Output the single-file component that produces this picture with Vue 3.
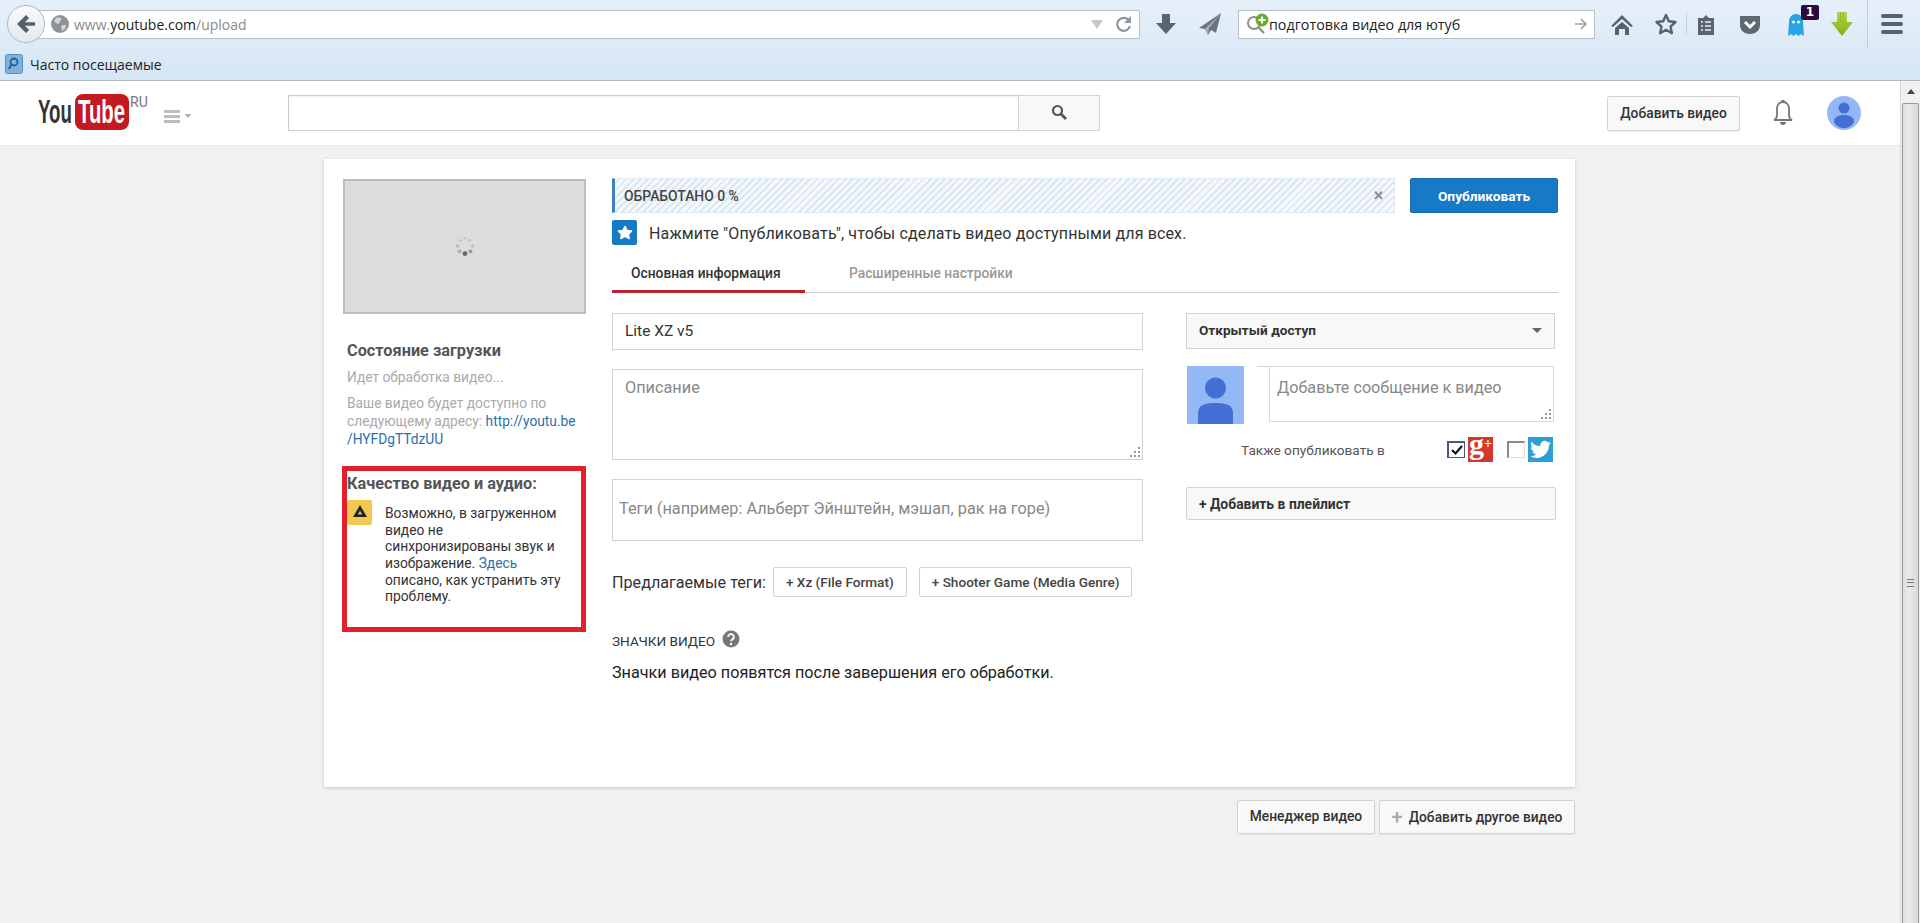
<script setup>
const tags = ['+ Xz (File Format)', '+ Shooter Game (Media Genre)']
</script>

<template>
  <div class="page">
    <!-- browser toolbar -->
    <header class="browser">
      <div class="toolbar">
        <button class="back">
          <svg width="24" height="24" viewBox="0 0 24 24"><path d="M12 3 3 12l9 9 3-3-4-4.2h10v-3.6H11L15 6z" fill="#55606e"/></svg>
        </button>
        <div class="address">
          <svg class="globe" width="18" height="18" viewBox="0 0 18 18">
            <circle cx="9" cy="9" r="9" fill="#8d9298"/>
            <path d="M5 3c3-1 5 0 6 1l-2 2-1 3-3-1-2-2zM11 10l4 0-1 4-3 2-1-4z" fill="#d2d5d8"/>
          </svg>
          <span class="url"><span class="dim">www.</span>youtube.com<span class="dim">/upload</span></span>
          <svg class="drop" width="12" height="10" viewBox="0 0 12 10"><path d="M0 1h12L6 10z" fill="#c3c8cd"/></svg>
          <svg class="reload" width="18" height="18" viewBox="0 0 18 18">
            <path d="M14 5.5A6.5 6.5 0 1 0 15 11" fill="none" stroke="#8e969e" stroke-width="2.2"/>
            <path d="M16 1v7H9z" fill="#8e969e"/>
          </svg>
        </div>
        <svg class="tool t-down" width="24" height="24" viewBox="0 0 24 24"><path d="M8 2h8v9h6L12 22 2 11h6z" fill="#5a6570"/></svg>
        <svg class="tool t-send" width="24" height="24" viewBox="0 0 24 24">
          <path d="M23 1 1 16l6 1 3 6 3-5 5 3z" fill="#6b747d"/>
          <path d="M23 1 7 17l3 6 1-7z" fill="#a9b0b7"/>
        </svg>
        <div class="websearch">
          <svg class="find" width="26" height="24" viewBox="0 0 26 24">
            <circle cx="9" cy="11" r="6" fill="none" stroke="#8f9288" stroke-width="2"/>
            <path d="m13 15 6 6" stroke="#8f9288" stroke-width="2.4"/>
            <circle cx="17" cy="8" r="6.5" fill="#62b02e"/>
            <path d="M17 4.5v7M13.5 8h7" stroke="#fff" stroke-width="2"/>
          </svg>
          <span class="query">подготовка видео для ютуб</span>
          <svg class="go" width="14" height="14" viewBox="0 0 14 14"><path d="M1 7h11M7 2l5 5-5 5" fill="none" stroke="#9aa1a8" stroke-width="1.6"/></svg>
        </div>
        <svg class="tool t-home" width="24" height="24" viewBox="0 0 24 24"><path d="M12 3 1 14l2 1 9-8 9 8 2-1zM5 16l7-6 7 6v7h-4v-6H9v6H5z" fill="#56626e"/></svg>
        <svg class="tool t-star" width="24" height="24" viewBox="0 0 24 24"><path d="m12 3 2.8 6.2 6.7.8-5 4.6 1.4 6.6L12 17.8l-5.900 3.400 1.400-6.600-5-4.600 6.700-.8z" fill="none" stroke="#56626e" stroke-width="2.400" stroke-linejoin="round"/></svg>
        <span class="sep"></span>
        <svg class="tool t-clip" width="24" height="24" viewBox="0 0 24 24">
          <path d="M4 6h5l3-3 3 3h5v17H4z" fill="#5a6570"/>
          <path d="M7 10h2M11 10h6M7 14h2M11 14h6M7 18h2M11 18h6" stroke="#e3edf6" stroke-width="1.600"/>
        </svg>
        <svg class="tool t-pocket" width="24" height="24" viewBox="0 0 24 24">
          <path d="M2 4h20v9c0 6-5 9-10 9S2 19 2 13z" fill="#5e6873"/>
          <path d="m7 10 5 5 5-5" fill="none" stroke="#fff" stroke-width="3"/>
        </svg>
        <div class="ghost-wrap">
          <svg width="24" height="24" viewBox="0 0 24 24">
            <path d="M4 24 5 10c0-5 3-8 7-8s7 3 7 8l1 14-3-2-2.500 2-2.500-2-2.500 2L7 22z" fill="#27a4e4"/>
            <circle cx="9.500" cy="10" r="1.500" fill="#fff"/><circle cx="14.500" cy="10" r="1.500" fill="#fff"/>
          </svg>
          <span class="badge">1</span>
        </div>
        <svg class="tool t-arrow" width="24" height="26" viewBox="0 0 24 26">
          <defs>
            <linearGradient id="arrowFill" x1="0" y1="0" x2="0" y2="1">
              <stop offset="0" stop-color="#b4d84a"/>
              <stop offset="1" stop-color="#7fb012"/>
            </linearGradient>
          </defs>
          <path d="M7 1h10v10h6L12 25 1 11h6z" fill="url(#arrowFill)"/>
          <path d="M10 1h1v10h-1zM13 1h1v10h-1z" fill="#8fbc24"/>
        </svg>
        <span class="sep tall"></span>
        <div class="burger"><i></i><i></i><i></i></div>
      </div>
      <div class="bookmarks">
        <svg width="18" height="20" viewBox="0 0 18 20">
          <rect x="0.500" y="0.500" width="17" height="19" rx="2" fill="#7eb2df" stroke="#5b8fbd"/>
          <circle cx="9" cy="8" r="3.500" fill="none" stroke="#1d5f99" stroke-width="1.800"/>
          <path d="m6 11-2 4" stroke="#1d5f99" stroke-width="2"/>
        </svg>
        <span>Часто посещаемые</span>
      </div>
    </header>

    <div class="viewport">
      <div class="content">
        <!-- youtube masthead -->
        <div class="masthead">
          <svg class="logo" width="112" height="38" viewBox="0 0 112 38">
            <text x="0" y="29" class="logo-you" textLength="34" lengthAdjust="spacingAndGlyphs">You</text>
            <rect x="37" y="0" width="54" height="36" rx="8" fill="#c4191f"/>
            <text x="40" y="29" class="logo-tube" textLength="47" lengthAdjust="spacingAndGlyphs">Tube</text>
            <text x="92" y="13" class="logo-ru">RU</text>
          </svg>
          <div class="guide">
            <span class="guide-bars"><i></i><i></i><i></i></span>
            <span class="guide-caret"></span>
          </div>
          <div class="yt-search">
            <input class="yt-input" type="text">
            <button class="yt-btn">
              <svg width="16" height="16" viewBox="0 0 16 16">
                <circle cx="6.500" cy="6.500" r="4.500" fill="none" stroke="#555" stroke-width="2.200"/>
                <path d="m10 10 5 5" stroke="#555" stroke-width="2.800"/>
              </svg>
            </button>
          </div>
          <button class="btn add-top">Добавить видео</button>
          <svg class="bell" width="24" height="28" viewBox="0 0 24 28">
            <path d="M12 3c-4 0-6 3-6 7v6c0 2-1 4-3 5h18c-2-1-3-3-3-5v-6c0-4-2-7-6-7z" fill="none" stroke="#777" stroke-width="1.800"/>
            <path d="M9 23h6a3 3 0 0 1-6 0zM10.500 1h3v3h-3z" fill="#777"/>
          </svg>
          <svg class="me" width="34" height="34" viewBox="0 0 34 34">
            <circle cx="17" cy="17" r="17" fill="#94b8f5"/>
            <circle cx="17" cy="12" r="5.500" fill="#4270d4"/>
            <path d="M7 26c0-5 4-7 10-7s10 2 10 7c-2 4-6 6-10 6s-8-2-10-6z" fill="#4270d4"/>
          </svg>
        </div>

        <main class="main">
          <section class="card">
            <aside class="left">
              <div class="thumb">
                <svg width="24" height="24" viewBox="0 0 22 22">
                  <circle cx="11" cy="17" r="2.200" fill="#666"/>
                  <circle cx="16" cy="15" r="1.800" fill="#999"/>
                  <circle cx="6" cy="15" r="1.800" fill="#aaa"/>
                  <circle cx="18" cy="10" r="1.500" fill="#bbb"/>
                  <circle cx="4" cy="10" r="1.500" fill="#bbb"/>
                  <circle cx="15" cy="5" r="1.300" fill="#c4c4c4"/>
                  <circle cx="7" cy="5" r="1.300" fill="#c4c4c4"/>
                  <circle cx="11" cy="3" r="1.300" fill="#c8c8c8"/>
                </svg>
              </div>
              <h3 class="state-title">Состояние загрузки</h3>
              <p class="state-line">Идет обработка видео...</p>
              <p class="state-url">Ваше видео будет доступно по следующему адресу: <a>http://youtu.be<br>/HYFDgTTdzUU</a></p>
              <div class="quality">
                <h3>Качество видео и аудио:</h3>
                <div class="quality-row">
                  <span class="warn">
                    <svg width="14" height="12" viewBox="0 0 14 12"><path d="M7 0 14 12H0zM7 5.500 5 9.500h4z" fill="#222" fill-rule="evenodd"/></svg>
                  </span>
                  <p>Возможно, в загруженном видео не синхронизированы звук и изображение. <a>Здесь</a> описано, как устранить эту проблему.</p>
                </div>
              </div>
            </aside>

            <div class="right">
              <div class="progress-row">
                <div class="progress">
                  <span class="progress-text">ОБРАБОТАНО 0 %</span>
                  <span class="progress-x">✕</span>
                </div>
                <button class="publish">Опубликовать</button>
              </div>
              <div class="notice">
                <span class="star-box">
                  <svg width="16" height="16" viewBox="0 0 16 16"><path d="m8 1.500 2.100 4 4.400.6-3.200 3 .9 4.400L8 11.400l-4.200 2.100.9-4.400-3.200-3 4.400-.6z" fill="#fff" stroke="#fff" stroke-width="1.600" stroke-linejoin="round"/></svg>
                </span>
                <span>Нажмите "Опубликовать", чтобы сделать видео доступными для всех.</span>
              </div>
              <nav class="tabs">
                <a class="tab active">Основная информация</a>
                <a class="tab">Расширенные настройки</a>
              </nav>
              <div class="form">
                <div class="form-main">
                  <input class="field title" type="text" value="Lite XZ v5">
                  <div class="area desc-area">
                    <textarea class="field desc" placeholder="Описание"></textarea>
                    <svg class="dots" width="10" height="10" viewBox="0 0 10 10"><path d="M8 0h2v2H8zM4 4h2v2H4zM8 4h2v2H8zM0 8h2v2H0zM4 8h2v2H4zM8 8h2v2H8z" fill="#999"/></svg>
                  </div>
                  <input class="field tagbox" type="text" placeholder="Теги (например: Альберт Эйнштейн, мэшап, рак на горе)">
                  <div class="suggest">
                    <span class="suggest-label">Предлагаемые теги:</span>
                    <button v-for="t in tags" :key="t" class="tag">{{ t }}</button>
                  </div>
                  <h4 class="badges">ЗНАЧКИ ВИДЕО
                    <svg width="18" height="18" viewBox="0 0 18 18">
                      <circle cx="9" cy="9" r="8.500" fill="#777"/>
                      <path d="M6.200 7a2.800 2.800 0 1 1 4.200 2.400C9.300 10 9 10.500 9 11.300" fill="none" stroke="#fff" stroke-width="1.800"/>
                      <circle cx="9" cy="14" r="1.200" fill="#fff"/>
                    </svg>
                  </h4>
                  <p class="badges-note">Значки видео появятся после завершения его обработки.</p>
                </div>
                <div class="form-side">
                  <button class="privacy"><span>Открытый доступ</span><i class="caret"></i></button>
                  <div class="share">
                    <svg width="57" height="58" viewBox="0 0 57 58">
                      <rect width="57" height="58" fill="#94b8f5"/>
                      <circle cx="28.500" cy="22" r="10.500" fill="#4270d4"/>
                      <path d="M11 58V47c0-8 7-10 17.500-10S46 39 46 47v11z" fill="#4270d4"/>
                    </svg>
                    <div class="area bubble">
                      <textarea placeholder="Добавьте сообщение к видео"></textarea>
                      <svg class="dots" width="10" height="10" viewBox="0 0 10 10"><path d="M8 0h2v2H8zM4 4h2v2H4zM8 4h2v2H8zM0 8h2v2H0zM4 8h2v2H4zM8 8h2v2H8z" fill="#999"/></svg>
                    </div>
                  </div>
                  <div class="also">
                    <span class="also-label">Также опубликовать в</span>
                    <span class="check on">
                      <svg width="14" height="12" viewBox="0 0 14 12"><path d="m2 6 3.500 3.500L12 2" fill="none" stroke="#111" stroke-width="2.200"/></svg>
                    </span>
                    <span class="net gplus"><span class="g">g</span><span class="p">+</span></span>
                    <span class="check second"></span>
                    <span class="net twitter">
                      <svg width="21" height="21" viewBox="0 0 24 24"><path d="M23.950 4.570a10 10 0 0 1-2.820.77 4.960 4.960 0 0 0 2.160-2.720c-.95.55-2 .96-3.120 1.190a4.920 4.920 0 0 0-8.380 4.480C7.690 8.100 4.070 6.130 1.640 3.160a4.820 4.820 0 0 0-.67 2.480c0 1.710.87 3.200 2.190 4.100a4.900 4.900 0 0 1-2.230-.61v.06a4.920 4.920 0 0 0 3.950 4.830 5 5 0 0 1-2.210.08 4.940 4.940 0 0 0 4.600 3.420A9.870 9.870 0 0 1 0 19.540a14 14 0 0 0 7.560 2.210c9.050 0 14-7.500 14-13.980 0-.21 0-.42-.02-.63a9.940 9.940 0 0 0 2.460-2.550z" fill="#fff"/></svg>
                    </span>
                  </div>
                  <button class="playlist">+ Добавить в плейлист</button>
                </div>
              </div>
            </div>
          </section>
          <div class="actions">
            <button class="btn manager">Менеджер видео</button>
            <button class="btn another"><span class="plus">+</span>Добавить другое видео</button>
          </div>
        </main>
      </div>

      <!-- page scrollbar -->
      <div class="scrollbar">
        <span class="arrow-up"></span>
        <div class="thumb-bar"><span class="grip"></span></div>
      </div>
    </div>
  </div>
</template>

<style>
html, body {
  margin: 0;
  overflow: hidden;
}
</style>

<style scoped>
.page {
  width: 1920px;
  height: 923px;
  display: flex;
  flex-direction: column;
  overflow: hidden;
  font-family: Roboto, "Noto Sans", sans-serif;
  background: #f1f1f1;
}
button {
  font-family: inherit;
  cursor: pointer;
}
h3, h4, p {
  margin: 0;
}
a {
  color: #2a6fa8;
}

/* browser */
.browser {
  height: 81px;
  box-sizing: border-box;
  flex: none;
  border-bottom: 1px solid #aeb9c4;
  background: linear-gradient(#e6f0fa, #d6e6f5);
  font-family: "Open Sans", "Noto Sans", sans-serif;
}
.toolbar {
  height: 48px;
  padding-left: 7px;
  display: flex;
  align-items: center;
}
.back {
  width: 38px;
  height: 38px;
  padding: 0;
  position: relative;
  z-index: 1;
  border-radius: 50%;
  border: 1px solid #aeb9c4;
  background: linear-gradient(#f8fafc, #e4e9ef);
  display: flex;
  align-items: center;
  justify-content: center;
}
.address {
  width: 1110px;
  height: 29px;
  margin-left: -15px;
  padding-left: 20px;
  box-sizing: border-box;
  background: #fff;
  border: 1px solid #b6c0ca;
  border-radius: 0 2px 2px 0;
  display: flex;
  align-items: center;
  font-size: 14px;
  color: #222;
}
.url {
  margin-left: 5px;
  flex: 1;
}
.dim {
  color: #8a8a8a;
}
.drop {
  margin-right: 12px;
}
.reload {
  margin-right: 6px;
}
.t-down { margin-left: 14px; }
.t-send { margin-left: 20px; }
.websearch {
  width: 357px;
  height: 29px;
  margin-left: 16px;
  box-sizing: border-box;
  padding: 0 6px;
  background: #fff;
  border: 1px solid #b6c0ca;
  display: flex;
  align-items: center;
  font-size: 14.300px;
  color: #222;
}
.query {
  flex: 1;
  margin-left: -2px;
}
.t-home { margin-left: 15px; }
.t-star { margin-left: 20px; }
.sep {
  width: 1px;
  height: 22px;
  margin-left: 8px;
  background: #c3ced9;
}
.sep.tall {
  height: 48px;
  margin-left: 13px;
}
.t-clip { margin-left: 7px; }
.t-pocket { margin-left: 20px; }
.ghost-wrap {
  margin-left: 22px;
  width: 24px;
  height: 24px;
  position: relative;
}
.badge {
  position: absolute;
  left: 17px;
  top: -7px;
  width: 18px;
  height: 15px;
  background: #2b0b3e;
  border-radius: 2px;
  color: #fff;
  font: bold 12px/15px "DejaVu Sans", sans-serif;
  text-align: center;
}
.t-arrow { margin-left: 22px; }
.burger {
  margin-left: 13px;
  width: 22px;
  display: flex;
  flex-direction: column;
  gap: 4px;
}
.burger i {
  display: block;
  height: 4px;
  border-radius: 2px;
  background: #56626e;
}
.bookmarks {
  height: 32px;
  padding-left: 5px;
  display: flex;
  align-items: center;
  gap: 7px;
  font-size: 14px;
  color: #222;
}

/* page area */
.viewport {
  flex: 1;
  display: flex;
  min-height: 0;
}
.content {
  flex: 1;
  min-width: 0;
}
.masthead {
  height: 65px;
  box-sizing: border-box;
  background: #fff;
  border-bottom: 1px solid #e8e8e8;
  display: flex;
  align-items: center;
  padding-left: 38px;
}
.logo {
  flex: none;
  overflow: visible;
}
.logo-you, .logo-tube {
  font: bold 34px "Liberation Sans", sans-serif;
}
.logo-you { fill: #333; }
.logo-tube { fill: #fff; }
.logo-ru {
  font: 14px Roboto, sans-serif;
  fill: #777;
}
.guide {
  margin-left: 14px;
  display: flex;
  align-items: center;
  gap: 5px;
  margin-top: 6px;
}
.guide-bars {
  width: 16px;
  display: flex;
  flex-direction: column;
  gap: 2px;
}
.guide-bars i {
  display: block;
  height: 3px;
  background: #bdbdbd;
}
.guide-caret {
  border: 3px solid transparent;
  border-top: 4px solid #aaa;
  border-bottom: 0;
}
.yt-search {
  margin-left: 97px;
  width: 812px;
  height: 36px;
  display: flex;
}
.yt-input {
  flex: 1;
  min-width: 0;
  box-sizing: border-box;
  border: 1px solid #ccc;
  border-right: 0;
  box-shadow: inset 0 1px 2px #eee;
  outline: none;
}
.yt-btn {
  width: 82px;
  border: 1px solid #d3d3d3;
  background: #f8f8f8;
  padding: 0;
}
.btn {
  border: 1px solid #d3d3d3;
  background: #f8f8f8;
  border-radius: 2px;
  font-size: 13.800px;
  font-weight: 500;
  color: #333;
  box-shadow: 0 1px 1px rgba(0, 0, 0, .06);
  padding: 0;
}
.add-top {
  margin-left: 507px;
  width: 133px;
  height: 35px;
}
.bell {
  margin-left: 31px;
}
.me {
  margin-left: 32px;
}

.main {
  padding: 13px 325px 0 324px;
}
.card {
  height: 628px;
  box-sizing: border-box;
  padding: 19px 0 0 19px;
  background: #fff;
  box-shadow: 0 1px 3px rgba(0, 0, 0, .2);
  display: flex;
}
.left {
  width: 243px;
  flex: none;
}
.thumb {
  height: 135px;
  margin-top: 1px;
  box-sizing: border-box;
  background: #dcdcdc;
  border: 2px solid #bcbcbc;
  display: flex;
  align-items: center;
  justify-content: center;
}
.state-title {
  margin: 27px 0 0 4px;
  font-size: 16.300px;
  line-height: 20px;
  font-weight: 700;
  color: #555;
}
.state-line, .state-url {
  margin-left: 4px;
  font-size: 13.750px;
  line-height: 18px;
  color: #aaa;
}
.state-line {
  margin-top: 7px;
}
.state-url {
  margin-top: 8px;
}
.quality {
  margin: 18px 0 0 -1px;
  width: 244px;
  height: 166px;
  box-sizing: border-box;
  border: 5px solid #e0202c;
  padding: 3px 0 0;
}
.quality h3 {
  font-size: 16.300px;
  line-height: 20px;
  font-weight: 700;
  color: #555;
}
.quality-row {
  margin-top: 6px;
  display: flex;
}
.warn {
  width: 25px;
  height: 25px;
  flex: none;
  border-radius: 2px;
  background: #f3c850;
  display: flex;
  align-items: center;
  justify-content: center;
}
.warn svg {
  margin-top: -4px;
}
.quality-row p {
  width: 178px;
  margin: 5px 0 0 13px;
  font-size: 13.800px;
  line-height: 16.650px;
  color: #333;
}

.right {
  margin-left: 26px;
  width: 946px;
}
.progress-row {
  display: flex;
  justify-content: space-between;
}
.progress {
  width: 783px;
  height: 35px;
  box-sizing: border-box;
  padding: 0 8px 0 9px;
  border: 1px solid #e2ebf3;
  border-left: 3px solid #3d7fc0;
  background: repeating-linear-gradient(-45deg, #dbe7f2 0 2px, #f5f9fc 2px 5px);
  display: flex;
  align-items: center;
  justify-content: space-between;
  font-size: 13.900px;
  font-weight: 500;
  color: #444;
}
.progress-x {
  margin-right: 2px;
  font-size: 13px;
  font-weight: 700;
  color: #888;
}
.publish {
  width: 148px;
  height: 35px;
  border: 1px solid #126db3;
  background: #167ac6;
  border-radius: 2px;
  color: #fff;
  font-size: 13.700px;
  font-weight: 700;
  padding: 0;
}
.notice {
  margin-top: 7px;
  height: 25px;
  display: flex;
  align-items: center;
  gap: 12px;
  font-size: 16px;
  letter-spacing: .13px;
  color: #333;
}
.notice > span:last-child {
  padding-top: 2px;
}
.star-box {
  width: 25px;
  height: 25px;
  border-radius: 2px;
  background: #167ac6;
  display: flex;
  align-items: center;
  justify-content: center;
}
.tabs {
  height: 48px;
  box-sizing: border-box;
  border-bottom: 1px solid #ccc;
  display: flex;
}
.tab {
  height: 48px;
  box-sizing: border-box;
  padding: 18px 19px 0;
  font-size: 13.800px;
  line-height: 20px;
  font-weight: 500;
  color: #999;
}
.tab.active {
  width: 193px;
  border-bottom: 3px solid #b8232f;
  color: #333;
}
.tab:last-child {
  margin-left: 25px;
}
.form {
  margin-top: 20px;
  display: flex;
  gap: 43px;
}
.form-main {
  width: 531px;
  flex: none;
}
.field {
  display: block;
  width: 100%;
  box-sizing: border-box;
  border: 1px solid #d3d3d3;
  padding: 0 12px;
  font-family: inherit;
  font-size: 16.300px;
  color: #333;
  outline: none;
  background: #fff;
}
.field::placeholder,
.bubble textarea::placeholder {
  color: #888;
  opacity: 1;
}
.area {
  position: relative;
}
.dots {
  position: absolute;
  right: 3px;
  bottom: 3px;
}
.title {
  height: 37px;
  padding-bottom: 2px;
  font-size: 15.500px;
}
.desc-area {
  margin-top: 19px;
}
.desc {
  height: 91px;
  padding-top: 8px;
  resize: none;
}
.tagbox {
  height: 62px;
  margin-top: 19px;
  padding: 0 0 4px 6px;
}
.suggest {
  margin-top: 26px;
  display: flex;
  align-items: center;
  gap: 12px;
  font-size: 16.150px;
  color: #333;
}
.suggest-label {
  margin-right: -5px;
}
.tag {
  height: 30px;
  padding: 0 12px;
  background: #fff;
  border: 1px solid #d3d3d3;
  border-radius: 2px;
  font-size: 13.600px;
  font-weight: 500;
  color: #444;
}
.badges {
  margin-top: 34px;
  display: flex;
  align-items: center;
  gap: 7px;
  font-size: 13.600px;
  font-weight: 400;
  line-height: 20px;
  color: #333;
}
.badges svg {
  margin-top: -5px;
}
.badges-note {
  margin-top: 12px;
  font-size: 16.200px;
  line-height: 20px;
  color: #222;
}
.form-side {
  width: 370px;
  flex: none;
}
.privacy {
  width: 369px;
  height: 36px;
  padding: 0 12px 2px 12px;
  background: #f8f8f8;
  border: 1px solid #d3d3d3;
  display: flex;
  align-items: center;
  justify-content: space-between;
  font-size: 13.600px;
  font-weight: 700;
  color: #333;
}
.caret {
  border: 5px solid transparent;
  border-top: 5px solid #666;
  border-bottom: 0;
}
.share {
  margin-top: 17px;
  display: flex;
  align-items: flex-start;
  padding-left: 1px;
}
.share svg {
  display: block;
}
.bubble {
  margin-left: 25px;
  width: 285px;
}
.bubble::before {
  content: "";
  position: absolute;
  left: -12px;
  top: 0;
  width: 13px;
  height: 13px;
  box-sizing: border-box;
  border-top: 1px solid #d8d8d8;
  background: linear-gradient(45deg, #fff 50%, transparent 50%);
}
.bubble textarea {
  display: block;
  width: 100%;
  height: 56px;
  box-sizing: border-box;
  border: 1px solid #d8d8d8;
  padding: 11px 8px 0 7px;
  font-family: inherit;
  font-size: 16.200px;
  outline: none;
  resize: none;
}
.also {
  margin-top: 13px;
  height: 25px;
  display: flex;
  align-items: center;
  font-size: 13.650px;
  color: #555;
}
.also-label {
  margin-left: 55px;
  width: 206px;
}
.check {
  width: 18px;
  height: 17px;
  box-sizing: border-box;
  border: 1px solid #ddd;
  border-top: 2px solid #8a8a8a;
  border-left: 2px solid #8a8a8a;
  background: #fff;
  display: flex;
  align-items: center;
  justify-content: center;
}
.check.on {
  border-color: #4a5a78;
}
.check.second {
  margin-left: 14px;
}
.net {
  width: 25px;
  height: 25px;
  margin-left: 3px;
  display: flex;
  align-items: center;
  justify-content: center;
}
.gplus {
  background: #d5382c;
  color: #fff;
  font-family: "Liberation Serif", serif;
  font-weight: 700;
  align-items: flex-start;
}
.gplus .g {
  font-size: 30px;
  line-height: 24px;
  margin-top: -5px;
}
.gplus .p {
  font-size: 14px;
  line-height: 14px;
}
.twitter {
  background: #2aa0d4;
}
.playlist {
  margin-top: 25px;
  width: 100%;
  height: 33px;
  padding: 0 0 0 12px;
  background: #f8f8f8;
  border: 1px solid #d3d3d3;
  border-radius: 2px;
  font-size: 13.900px;
  font-weight: 700;
  color: #333;
  text-align: left;
}
.actions {
  margin-top: 13px;
  display: flex;
  justify-content: flex-end;
  gap: 4px;
}
.manager {
  width: 138px;
  height: 34px;
  padding-bottom: 3px;
}
.another {
  width: 196px;
  height: 34px;
  display: flex;
  align-items: center;
  justify-content: center;
  gap: 6px;
}
.plus {
  font-size: 20px;
  line-height: 20px;
  color: #aaa;
}

.scrollbar {
  width: 20px;
  flex: none;
  background: #f0f0f0;
  border-left: 1px solid #d9d9d9;
  box-sizing: border-box;
  display: flex;
  flex-direction: column;
  align-items: center;
}
.arrow-up {
  margin-top: 8px;
  border: 4px solid transparent;
  border-bottom: 5px solid #444;
  border-top: 0;
}
.thumb-bar {
  margin-top: 9px;
  flex: 1;
  width: 17px;
  box-sizing: border-box;
  border: 1px solid #9a9a9a;
  border-bottom: 0;
  border-radius: 2px 2px 0 0;
  background: linear-gradient(90deg, #dcdcdc, #eaeaea 40%, #d8d8d8);
  display: flex;
  align-items: center;
  justify-content: center;
}
.grip {
  width: 7px;
  height: 6px;
  margin-top: 138px;
  border-top: 1px solid #777;
  border-bottom: 1px solid #777;
  position: relative;
}
.grip::after {
  content: "";
  position: absolute;
  left: 0;
  right: 0;
  top: 2px;
  height: 1px;
  background: #777;
}
</style>
